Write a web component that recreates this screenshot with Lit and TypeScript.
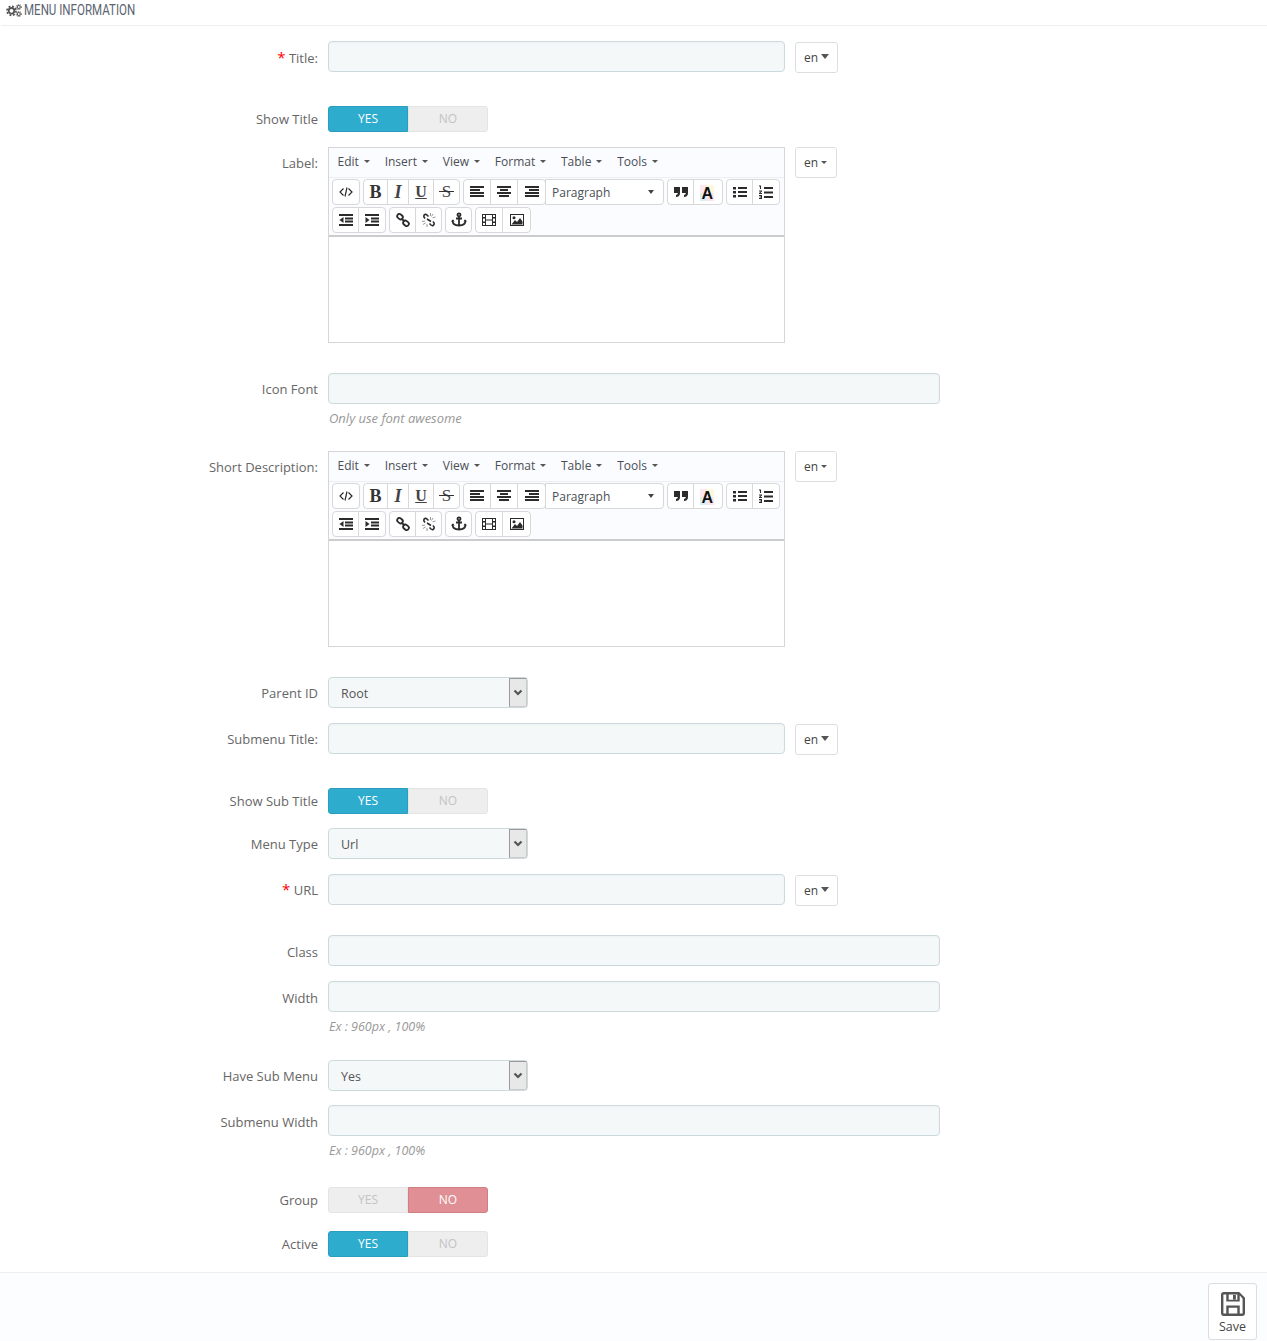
import { LitElement, html, css, svg } from "lit";
import { customElement } from "lit/decorators.js";

const box = (content: unknown, size = 16) =>
  html`<svg class="ic" width=${size} height=${size} viewBox="0 0 16 16" fill="currentColor">${content}</svg>`;

const bars = (rows: [number, number, number][]) =>
  rows.map(([x, y, w]) => svg`<rect x=${x} y=${y} width=${w} height="2"/>`);

const icons: Record<string, unknown> = {
  code: box(svg`<path d="M5.500 4.500 2 8l3.500 3.500M10.500 4.500 14 8l-3.500 3.500M9 3.500 7 12.500" fill="none" stroke="currentColor" stroke-width="1.200"/>`),
  alignLeft: box(bars([[1, 2, 14], [1, 5, 10], [1, 8, 14], [1, 11, 14]])),
  alignCenter: box(bars([[1, 2, 14], [4, 5, 8], [1, 8, 14], [3, 11, 10]])),
  alignRight: box(bars([[1, 2, 14], [5, 5, 10], [1, 8, 14], [1, 11, 14]])),
  quote: box(svg`<path d="M1 3h6v6c0 2.500-1.500 4-4 4v-2c1 0 1.800-.8 1.800-2H1zM9 3h6v6c0 2.500-1.500 4-4 4v-2c1 0 1.800-.8 1.800-2H9z"/>`),
  ul: box(svg`<path d="M1 3h3v2.500H1zM1 7h3v2.500H1zM1 11h3v2.500H1zM6 3h9v2H6zM6 7h9v2H6zM6 11h9v2H6z"/>`),
  ol: box(svg`<path d="M6 3h9v2H6zM6 7.500h9v2H6zM6 12h9v2H6zM1 1.500h2v3.500H2V2.500H1zM1 6.500h3v1L2.300 9H4v1H1V9l1.800-1.500H1zM1 11h3v4H1v-1h2v-.5H1.500v-1H3V12H1z"/>`),
  outdent: box(svg`<path d="M1 2h14v2H1zM7 5.500h8v2H7zM7 8.500h8v2H7zM1 12h14v2H1zM5.500 5v6L1.500 8z"/>`),
  indent: box(svg`<path d="M1 2h14v2H1zM7 5.500h8v2H7zM7 8.500h8v2H7zM1 12h14v2H1zM1.500 5v6l4-3z"/>`),
  link: box(svg`<g fill="none" stroke="currentColor" stroke-width="1.800"><rect x="2" y="2.500" width="6" height="4.400" rx="2.200" transform="rotate(40 5 4.700)"/><rect x="8" y="9.100" width="6" height="4.400" rx="2.200" transform="rotate(40 11 11.300)"/><path d="M6.500 6.500l3 3"/></g>`),
  unlink: box(svg`<g fill="none" stroke="currentColor" stroke-width="1.600"><path d="M7.500 4.500 6 3C4.500 1.700 2.700 2.700 2.800 4.500c0 .8.600 1.300 1.300 2M8.500 11.500l1.500 1.500c1.500 1.300 3.300.3 3.200-1.500 0-.8-.6-1.300-1.300-2M6 7l4 2.500"/><path d="M9.500 1v3M12 2l-1.500 2.500M14.500 5l-3 .8M1 9.500l3-.5M2 12.500 4.500 11M6 15v-3" stroke="#999" stroke-width="1"/></g>`),
  anchor: box(svg`<g fill="none" stroke="currentColor" stroke-width="1.800"><circle cx="8" cy="2.800" r="1.500"/><path d="M8 4v10M5 6.500h6M1.500 8.500c0 3.500 3 5 6.500 5s6.500-1.500 6.500-5"/></g><path d="M.2 9.500 2 7.200 3.500 9.500zM12.500 9.500 14 7.200l1.800 2.300z"/>`),
  film: box(svg`<path fill-rule="evenodd" d="M1 2h14v12H1zM2 3v2h2V3zM2 6.500v3h2v-3zM2 11v2h2v-2zM5 3v4.500h6V3zM5 8.500V13h6V8.500zM12 3v2h2V3zM12 6.500v3h2v-3zM12 11v2h2v-2z"/>`),
  image: box(svg`<path fill-rule="evenodd" d="M1 2h14v12H1zM2 3v10h12V3z"/><circle cx="5" cy="5.800" r="1.500"/><path d="M2.500 12.500 6 8l2 2 3-4 2.500 3.500v3z"/>`),
};

const colorA = html`<span class="color-a"><i class="sw s1"></i><i class="sw s2"></i><i class="sw s3"></i><i class="sw s4"></i><b>A</b></span>`;

type Btn = { w: number; c?: string; i?: string; t?: string; cls?: string };
const row1: (Btn[] | "para")[] = [
  [{ w: 26, i: "code" }],
  [{ w: 24, t: "B", cls: "tb" }, { w: 21, t: "I", cls: "ti" }, { w: 25, t: "U", cls: "tu" }, { w: 25, t: "S", cls: "ts" }],
  [{ w: 27, i: "alignLeft" }, { w: 27, i: "alignCenter" }, { w: 27, i: "alignRight" }],
  "para",
  [{ w: 26, i: "quote" }, { w: 28, t: "A", c: "color" }],
  [{ w: 26, i: "ul" }, { w: 26, i: "ol" }],
];
const row2: Btn[][] = [
  [{ w: 26, i: "outdent" }, { w: 26, i: "indent" }],
  [{ w: 26, i: "link" }, { w: 25, i: "unlink" }],
  [{ w: 25, i: "anchor" }],
  [{ w: 27, i: "film" }, { w: 27, i: "image" }],
];
const menus = ["Edit", "Insert", "View", "Format", "Table", "Tools"];

const cogs = html`<svg class="cogs" width="16" height="13" viewBox="0 0 16 13">
  <g fill="none" stroke="currentColor">
    <circle cx="5.500" cy="6.800" r="2.800" stroke-width="1.800"/>
    <circle cx="5.500" cy="6.800" r="4.500" stroke-width="1.700" stroke-dasharray="1.900 1.630"/>
    <circle cx="12.800" cy="3" r="1.500" stroke-width="1.100"/>
    <circle cx="12.800" cy="3" r="2.600" stroke-width="1" stroke-dasharray="1.100 1.070"/>
    <circle cx="12.800" cy="10" r="1.500" stroke-width="1.100"/>
    <circle cx="12.800" cy="10" r="2.600" stroke-width="1" stroke-dasharray="1.100 1.070"/>
  </g>
</svg>`;

const saveIcon = html`<svg width="24" height="24" viewBox="0 0 25 25" fill="#555">
  <path fill-rule="evenodd" d="M3 0h16l6 6v16a3 3 0 0 1-3 3H3a3 3 0 0 1-3-3V3a3 3 0 0 1 3-3zM2.500 2.500v20h3V14h14v8.500h3V7l-3-3.500V10H5.500V2.500zM8 2.500V8h9V2.500zM8 16.500v6h9v-6z"/>
  <rect x="12.500" y="3" width="3" height="5"/>
</svg>`;

@customElement("app-root")
export class AppRoot extends LitElement {
  static styles = css`
    :host { display: block; height: 1341px; font-family: "Open Sans", sans-serif; font-size: 13px; color: #555; background: #fff; overflow: hidden; }
    * { box-sizing: border-box; }
    .head { height: 26px; border-bottom: 1px solid #eee; margin-left: 1px; padding: 4px 0 0 5px; display: flex; align-items: flex-start; color: #555; }
    .cogs { flex: none; }
    .head-title { font-family: "Roboto", sans-serif; font-size: 14.500px; line-height: 14px; margin-left: 2px; transform: scaleX(.796); transform-origin: left center; white-space: nowrap; color: #5c6470; }
    form { display: block; padding-top: 15px; }
    .row { display: flex; align-items: flex-start; }
    .g14 { margin-bottom: 14px; } .g15 { margin-bottom: 15px; } .g18 { margin-bottom: 18px; }
    .g29 { margin-bottom: 29px; } .g30 { margin-bottom: 30px; } .g33 { margin-bottom: 33px; }
    .label { width: 318px; flex: none; text-align: right; color: #666; line-height: 18px; padding-top: 8px; white-space: nowrap; }
    .tight .label { padding-top: 7px; }
    .sw-row .label { padding-top: 4px; }
    .ed-row .label { padding-top: 7px; }
    .req { color: #f00; font-size: 15px; line-height: 12px; }
    .ctl { margin-left: 10px; }
    .input { height: 31px; background: #f5f8f9; border: 1px solid #ccdade; border-radius: 4px; box-shadow: inset 0 1px 2px rgba(0,0,0,.03); }
    .w457 { width: 457px; } .w612 { width: 612px; }
    .help { margin: 6px 0 0 1px; font-size: 12.500px; font-style: italic; line-height: 17px; height: 27px; color: #999; }
    .help.wide { font-size: 13px; }
    .en { margin-left: 10px; width: 43px; height: 31px; margin-top: 1px; background: #fff; border: 1px solid #dcdfe2; border-radius: 3px; display: flex; align-items: center; padding-left: 8px; font-size: 12px; color: #444; }
    .en::after { content: ""; margin: -2px 0 0 3px; border-top: 5px solid #555; border-left: 4.500px solid transparent; border-right: 4.500px solid transparent; }
    .en.small { width: 42px; margin-top: 0; }
    .en.small::after { border-top-width: 3.500px; border-left-width: 3.500px; border-right-width: 3.500px; margin: 0 0 0 3px; }
    .switch { display: flex; width: 160px; height: 26px; font-size: 12px; line-height: 24px; text-align: center; }
    .switch span { width: 80px; border: 1px solid #e4e4e4; background: #eee; color: #c3c3c3; }
    .switch span:first-child { border-radius: 3px 0 0 3px; }
    .switch span:last-child { border-radius: 0 3px 3px 0; }
    .switch .on { background: #2eacce; border-color: #2a9ebd; color: #fff; }
    .switch .off { background: #e08f95; border-color: #d07d83; color: #fff; }
    .editor { width: 457px; height: 196px; border: 1px solid #d6d6d6; display: flex; flex-direction: column; background: #fff; }
    .menubar { height: 30px; flex: none; display: flex; background: #fbfcff; border-bottom: 1px solid #eceef0; padding: 5px 0 0 8.500px; color: #4a4f55; font-size: 12px; line-height: 17px; }
    .menu { display: flex; align-items: center; height: 17px; }
    .menu::after { content: ""; margin: 0 14.800px 0 5px; border-top: 3.500px solid #555; border-left: 3px solid transparent; border-right: 3px solid transparent; }
    .toolbar { height: 59px; flex: none; background: #fbfcff; border-bottom: 2px solid #ccc; padding: 1px 0 0 3px; }
    .tbrow { display: flex; height: 26px; margin-bottom: 2px; }
    .grp { display: flex; margin-right: 3px; height: 26px; border: 1px solid #d8d8d8; border-radius: 4px; background: #fff; }
    .btn { display: flex; align-items: center; justify-content: center; border-right: 1px solid #d8d8d8; color: #2b2b2b; height: 24px; flex: none; }
    .btn:last-child { border-right: 0; }
    .ic { display: block; }
    .tb { font: bold 18px "Liberation Serif", serif; color: #333; }
    .ti { font: italic bold 18px "Liberation Serif", serif; color: #444; }
    .tu { font: bold 16px "Liberation Serif", serif; color: #444; text-decoration: underline; }
    .ts { font: 17px "Liberation Serif", serif; color: #444; position: relative; }
    .ts::after { content: ""; position: absolute; left: 5px; right: 5px; top: 11px; height: 1px; background: #333; }
    .para { width: 119px; margin: 0 3px 0 -4px; height: 26px; border: 1px solid #d8d8d8; border-radius: 0 4px 4px 0; background: #fff; display: flex; align-items: center; justify-content: space-between; padding: 0 9px 0 6px; font-size: 12px; color: #4a4f55; }
    .para::after { content: ""; border-top: 4px solid #444; border-left: 3.500px solid transparent; border-right: 3.500px solid transparent; }
    .color-a { position: relative; width: 14px; height: 15px; display: block; margin-left: -2px; }
    .color-a b { position: absolute; left: 1.500px; top: -1px; font: bold 16px/19px "Liberation Sans", sans-serif; color: #111; }
    .sw { position: absolute; width: 7px; height: 8px; }
    .s1 { left: 0; top: 0; background: #fde8ee; } .s2 { left: 7px; top: 0; background: #fdf8d8; }
    .s3 { left: 0; top: 8px; background: #d8effa; } .s4 { left: 7px; top: 8px; background: #fce4eb; }
    .select { width: 200px; height: 31px; background: #f5f8f9; border: 1px solid #ccdade; border-radius: 4px; display: flex; align-items: center; justify-content: space-between; padding-left: 12px; color: #555; font-size: 12.500px; }
    .sel-text { padding-top: 2px; }
    .arrow { width: 18px; height: 29px; background: #e8e8e8; border: 1px solid #9a9a9a; border-right-color: #ccc; border-bottom-color: #ccc; display: flex; align-items: center; justify-content: center; color: #555; }
    .arrow svg { display: block; }
    .footer { height: 69px; border-top: 1px solid #eee; background: #fcfdfe; display: flex; justify-content: flex-end; padding: 10px 10px 0 0; }
    .save { width: 49px; height: 57px; border: 1px solid #ddd; border-radius: 3px; background: #fff; display: flex; flex-direction: column; align-items: center; padding-top: 8px; font-size: 12.500px; line-height: 17px; color: #444; }
    .save span { margin-top: 2px; }
  `;

  private group(btns: Btn[]) {
    return html`<div class="grp">${btns.map(
      (b) => html`<div class="btn ${b.cls ?? ""}" style="width:${b.w}px">${b.c ? colorA : b.i ? icons[b.i] : b.t}</div>`
    )}</div>`;
  }

  private editor() {
    return html`<div class="editor ctl">
      <div class="menubar">${menus.map((m) => html`<div class="menu">${m}</div>`)}</div>
      <div class="toolbar">
        <div class="tbrow">${row1.map((g) => (g === "para" ? html`<div class="para">Paragraph</div>` : this.group(g)))}</div>
        <div class="tbrow">${row2.map((g) => this.group(g))}</div>
      </div>
    </div>`;
  }

  private label(text: string, req = false) {
    return html`<div class="label">${req ? html`<span class="req">*</span> ` : ""}${text}</div>`;
  }

  private sw(label: string, yes: boolean, gap: string) {
    return html`<div class="row sw-row ${gap}">${this.label(label)}
      <div class="switch ctl">
        <span class=${yes ? "on" : ""}>YES</span><span class=${yes ? "" : "off"}>NO</span>
      </div></div>`;
  }

  private lang(label: string, gap: string, req = false, tight = true) {
    return html`<div class="row ${gap} ${tight ? "tight" : ""}">${this.label(label, req)}
      <div class="input w457 ctl"></div><div class="en">en</div></div>`;
  }

  private full(label: string, gap: string, help = "", tight = false, wide = false) {
    return html`<div class="row ${gap} ${tight ? "tight" : ""}">${this.label(label)}
      <div class="ctl"><div class="input w612"></div>${help ? html`<div class="help ${wide ? "wide" : ""}">${help}</div>` : ""}</div></div>`;
  }

  private sel(label: string, value: string, gap: string) {
    return html`<div class="row tight ${gap}">${this.label(label)}
      <div class="select ctl"><span class="sel-text">${value}</span><div class="arrow">
        <svg width="10" height="8" viewBox="0 0 10 8"><path d="M1.500 1.500 5 5l3.500-3.500" fill="none" stroke="currentColor" stroke-width="2.200"/></svg>
      </div></div></div>`;
  }

  private ed(label: string) {
    return html`<div class="row ed-row g30">${this.label(label)}${this.editor()}<div class="en small">en</div></div>`;
  }

  render() {
    return html`
      <div class="head">${cogs}<span class="head-title">MENU INFORMATION</span></div>
      <form>
        ${this.lang("Title:", "g33", true, false)}
        ${this.sw("Show Title", true, "g15")}
        ${this.ed("Label:")}
        ${this.full("Icon Font", "g14", "Only use font awesome", true, true)}
        ${this.ed("Short Description:")}
        ${this.sel("Parent ID", "Root", "g15")}
        ${this.lang("Submenu Title:", "g33")}
        ${this.sw("Show Sub Title", true, "g14")}
        ${this.sel("Menu Type", "Url", "g15")}
        ${this.lang("URL", "g29", true)}
        ${this.full("Class", "g15")}
        ${this.full("Width", "g15", "Ex : 960px , 100%")}
        ${this.sel("Have Sub Menu", "Yes", "g14")}
        ${this.full("Submenu Width", "g18", "Ex : 960px , 100%")}
        ${this.sw("Group", false, "g18")}
        ${this.sw("Active", true, "g15")}
      </form>
      <div class="footer"><div class="save">${saveIcon}<span>Save</span></div></div>
    `;
  }
}
